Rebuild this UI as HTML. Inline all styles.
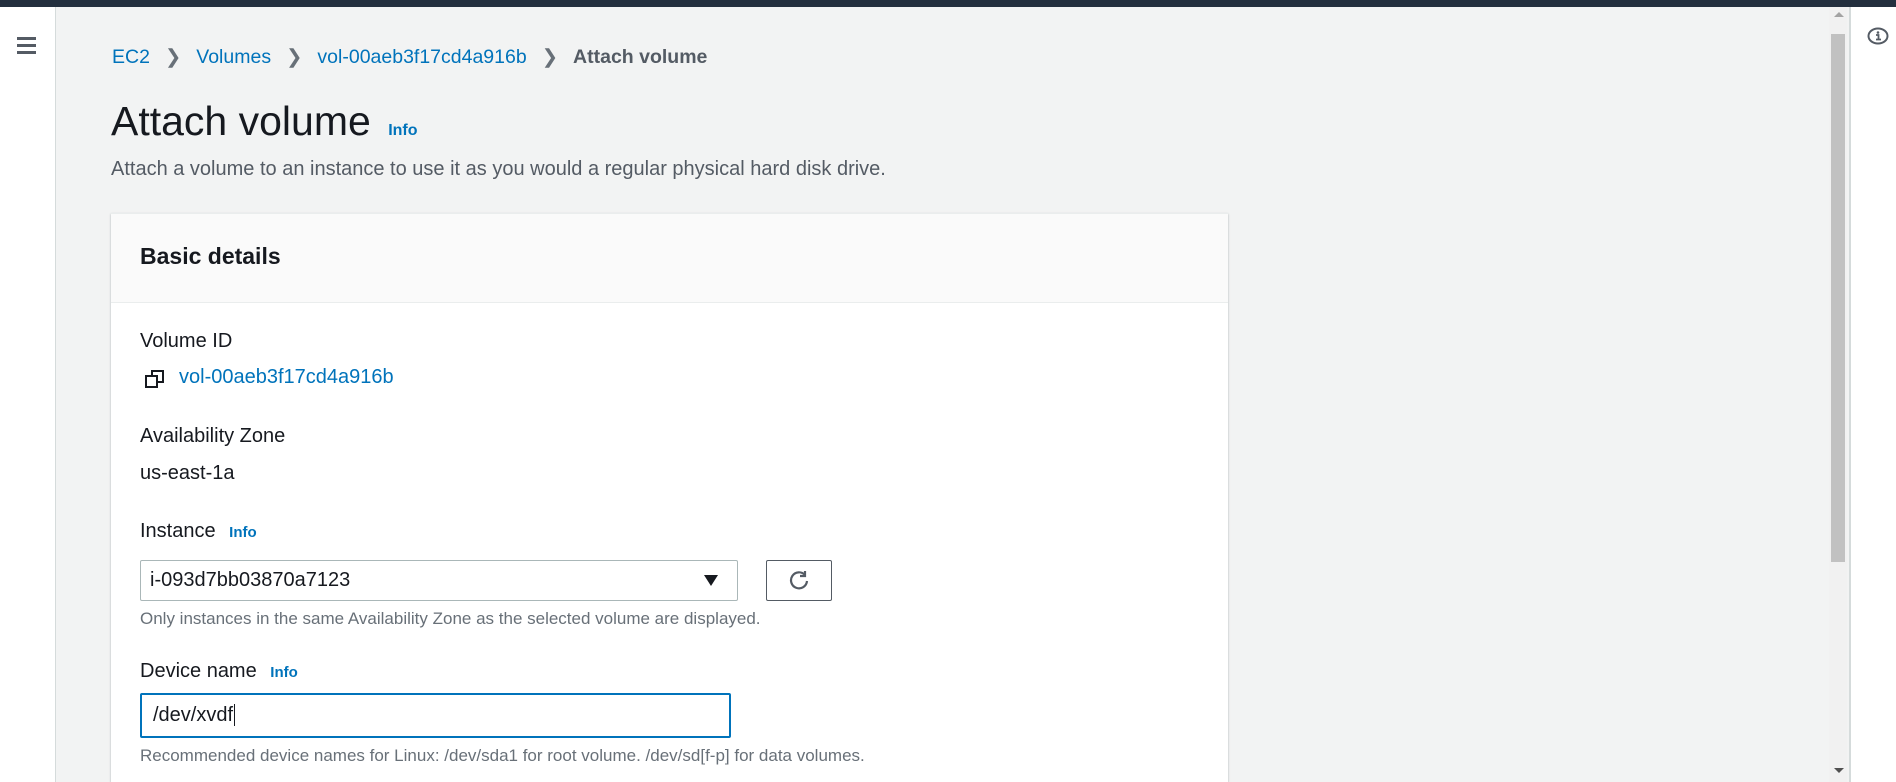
<!DOCTYPE html>
<html style="overflow:hidden;height:782px"><head><meta charset="utf-8"><style>
*{box-sizing:border-box;margin:0;padding:0}
html,body{overflow:hidden}
body{width:1896px;height:782px;background:#f2f3f3;font-family:"Liberation Sans",Arial,sans-serif;color:#16191f;position:relative}
.top{position:absolute;left:0;top:0;width:1896px;height:7px;background:#232f3e}
.nav{position:absolute;left:0;top:7px;width:56px;height:775px;background:#fff;border-right:1px solid #d5dbdb}
.ham{position:absolute;left:17px;top:30px;width:19px}
.ham div{height:3px;background:#545b64;margin-bottom:4px}
.a{position:absolute;white-space:nowrap}
.link{color:#0073bb}
.info{color:#0073bb;font-weight:bold;font-size:15px}
.card{position:absolute;left:111px;top:213px;width:1117px;height:569px;background:#fff;box-shadow:0 1px 2px rgba(0,28,36,.3);border-top:1px solid #eaeded}
.hdr{height:89px;background:#fafafa;border-bottom:1px solid #eaeded}
.lbl{font-size:20px;color:#16191f}
.help{font-size:17px;color:#687078}
.sb{position:absolute;left:1829px;top:7px;width:18px;height:775px;background:#f1f1f1}
.thumb{position:absolute;left:1831px;top:34px;width:14px;height:528px;background:#c1c1c1}
.rp{position:absolute;left:1849px;top:7px;width:47px;height:775px;background:#fff;border-left:2px solid #d5dbdb}
</style></head><body>
<div class="top"></div>
<div class="nav"><div class="ham"><div></div><div></div><div></div></div></div>
<div class="a" style="left:112px;top:45px;font-size:19.5px"><span class="link">EC2</span><span style="color:#687078;margin:0 15px">&#x276F;</span><span class="link">Volumes</span><span style="color:#687078;margin:0 15px">&#x276F;</span><span class="link">vol-00aeb3f17cd4a916b</span><span style="color:#687078;margin:0 15px">&#x276F;</span><b style="color:#545b64">Attach volume</b></div>
<div class="a" style="left:111px;top:98px;font-size:41px;color:#16191f">Attach volume <span class="info" style="font-size:16px;margin-left:6px">Info</span></div>
<div class="a" style="left:111px;top:158px;font-size:20px;color:#545b64">Attach a volume to an instance to use it as you would a regular physical hard disk drive.</div>
<div class="card"><div class="hdr"></div></div>
<div class="a" style="left:140px;top:243px;font-size:23px;font-weight:bold">Basic details</div>
<div class="a lbl" style="left:140px;top:330px">Volume ID</div>
<svg class="a" style="left:145px;top:369px" width="20" height="20" viewBox="0 0 20 20" fill="none" stroke="#16191f" stroke-width="2"><rect x="1" y="7" width="11" height="11"/><path d="M7 7V2h11v11h-6"/></svg>
<div class="a link" style="left:179px;top:366px;font-size:20px">vol-00aeb3f17cd4a916b</div>
<div class="a lbl" style="left:140px;top:425px">Availability Zone</div>
<div class="a lbl" style="left:140px;top:462px">us-east-1a</div>
<div class="a lbl" style="left:140px;top:520px">Instance <span class="info" style="margin-left:8px">Info</span></div>
<div class="a" style="left:140px;top:560px;width:598px;height:41px;border:1px solid #aab7b8;border-radius:2px;background:#fff"></div>
<div class="a lbl" style="left:150px;top:569px">i-093d7bb03870a7123</div>
<div class="a" style="left:704px;top:575px;width:0;height:0;border-left:7px solid transparent;border-right:7px solid transparent;border-top:11px solid #16191f"></div>
<div class="a" style="left:766px;top:560px;width:66px;height:41px;border:1px solid #545b64;border-radius:2px;background:#fff"></div>
<svg class="a" style="left:789px;top:570px" width="21" height="21" viewBox="0 0 21 21" fill="none" stroke="#545b64" stroke-width="2.2"><path d="M16 5A8 8 0 1 0 18 11"/><path d="M16 1v5h-5"/></svg>
<div class="a help" style="left:140px;top:609px">Only instances in the same Availability Zone as the selected volume are displayed.</div>
<div class="a lbl" style="left:140px;top:660px">Device name <span class="info" style="margin-left:8px">Info</span></div>
<div class="a" style="left:140px;top:693px;width:591px;height:45px;border:2px solid #0073bb;border-radius:2px;background:#fff"></div>
<div class="a lbl" style="left:153px;top:704px">/dev/xvdf<span style="border-left:1px solid #16191f;margin-left:1px"></span></div>
<div class="a help" style="left:140px;top:746px">Recommended device names for Linux: /dev/sda1 for root volume. /dev/sd[f-p] for data volumes.</div>
<div class="sb"></div><div class="thumb"></div>
<div class="a" style="left:1834px;top:12px;border-left:5px solid transparent;border-right:5px solid transparent;border-bottom:5px solid #a3a3a3"></div>
<div class="a" style="left:1834px;top:768px;border-left:5px solid transparent;border-right:5px solid transparent;border-top:5px solid #505050"></div>
<div class="rp"></div>
<svg class="a" style="left:1867px;top:27px" width="22" height="18" viewBox="0 0 22 18"><ellipse cx="11" cy="9" rx="9.5" ry="7.5" fill="none" stroke="#545b64" stroke-width="2"/><circle cx="11" cy="5.5" r="1.3" fill="#545b64"/><path d="M9 8h2.5v4.5M9 12.5h5" stroke="#545b64" stroke-width="1.8" fill="none"/></svg>
</body></html>
